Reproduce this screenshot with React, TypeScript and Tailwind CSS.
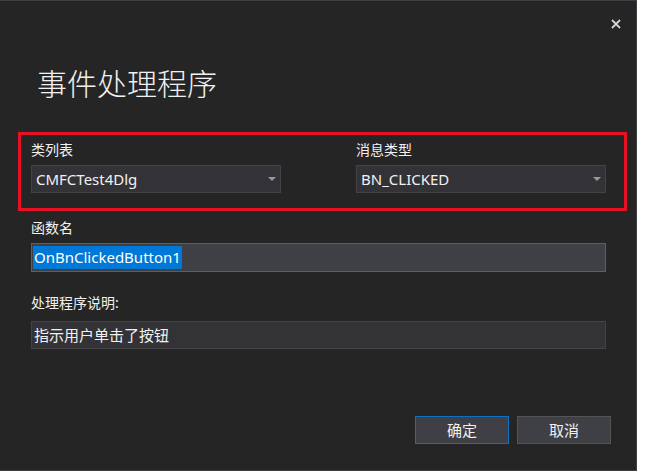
import React from 'react';

const font = { fontFamily: '"Noto Sans", "Noto Sans CJK SC", sans-serif' };

const Combo: React.FC<{ value: string }> = ({ value }) => (
  <div className="w-[250px] h-[28px] flex items-center justify-between bg-[#333337] border border-[#434346] pl-[4px] pr-[4px]">
    <span className="text-[15px] leading-[20px] text-[#f1f1f1]">{value}</span>
    <svg width="8" height="4" viewBox="0 0 8 4">
      <path d="M0 0 L8 0 L4 4 Z" fill="#999999" />
    </svg>
  </div>
);

export default function App() {
  return (
    <div className="w-[646px] h-[473px] bg-white" style={font}>
      <div className="w-[637px] h-[471px] bg-[#252526] border-t border-r border-b border-[#3f3f46] flex flex-col">
        {/* header */}
        <div className="h-[131px] flex flex-col">
          <div className="flex justify-end pt-[17px] pr-[14px]">
            <button className="w-[12px] h-[12px] flex items-center justify-center">
              <svg width="10" height="10" viewBox="0 0 10 10">
                <path d="M1 1 L9 9 M9 1 L1 9" stroke="#d4d4d4" strokeWidth="1.8" />
              </svg>
            </button>
          </div>
          <h1 className="ml-[37px] mt-[37px] text-[30px] leading-[34px] font-light text-[#f1f1f1]">
            事件处理程序
          </h1>
        </div>

        {/* highlighted selection */}
        <div className="ml-[18px] w-[609px] h-[79px] border-[3px] border-[#e81123] pl-[10px] pt-[5px] grid grid-cols-[250px_250px] gap-x-[75px]">
          <div className="flex flex-col">
            <label className="text-[14px] leading-[20px] text-[#f1f1f1]">类列表</label>
            <div className="mt-[5px]">
              <Combo value="CMFCTest4Dlg" />
            </div>
          </div>
          <div className="flex flex-col">
            <label className="text-[14px] leading-[20px] text-[#f1f1f1]">消息类型</label>
            <div className="mt-[5px]">
              <Combo value="BN_CLICKED" />
            </div>
          </div>
        </div>

        <div className="ml-[31px] flex flex-col">
          <label className="mt-[7px] text-[14px] leading-[20px] text-[#f1f1f1]">函数名</label>
          <div className="mt-[5px] w-[575px] h-[29px] bg-[#3f3f46] border border-[#007acc] flex items-center pl-[1px]">
            <span className="bg-[#0078d7] text-white text-[15px] leading-[23px] px-[1px]">OnBnClickedButton1</span>
          </div>

          <label className="mt-[21px] text-[14px] leading-[20px] text-[#f1f1f1]">处理程序说明:</label>
          <div className="mt-[8px] w-[575px] h-[28px] bg-[#333337] border border-[#434346] flex items-center pl-[2px]">
            <span className="text-[15px] leading-[20px] text-[#f1f1f1]">指示用户单击了按钮</span>
          </div>
        </div>

        <div className="mt-[67px] flex justify-end gap-[8px] pr-[25px]">
          <button className="w-[94px] h-[28px] bg-[#3f3f46] border border-[#0e70c0] text-[15px] text-[#f1f1f1]">确定</button>
          <button className="w-[94px] h-[28px] bg-[#3f3f46] border border-[#555555] text-[15px] text-[#f1f1f1]">取消</button>
        </div>
      </div>
    </div>
  );
}
